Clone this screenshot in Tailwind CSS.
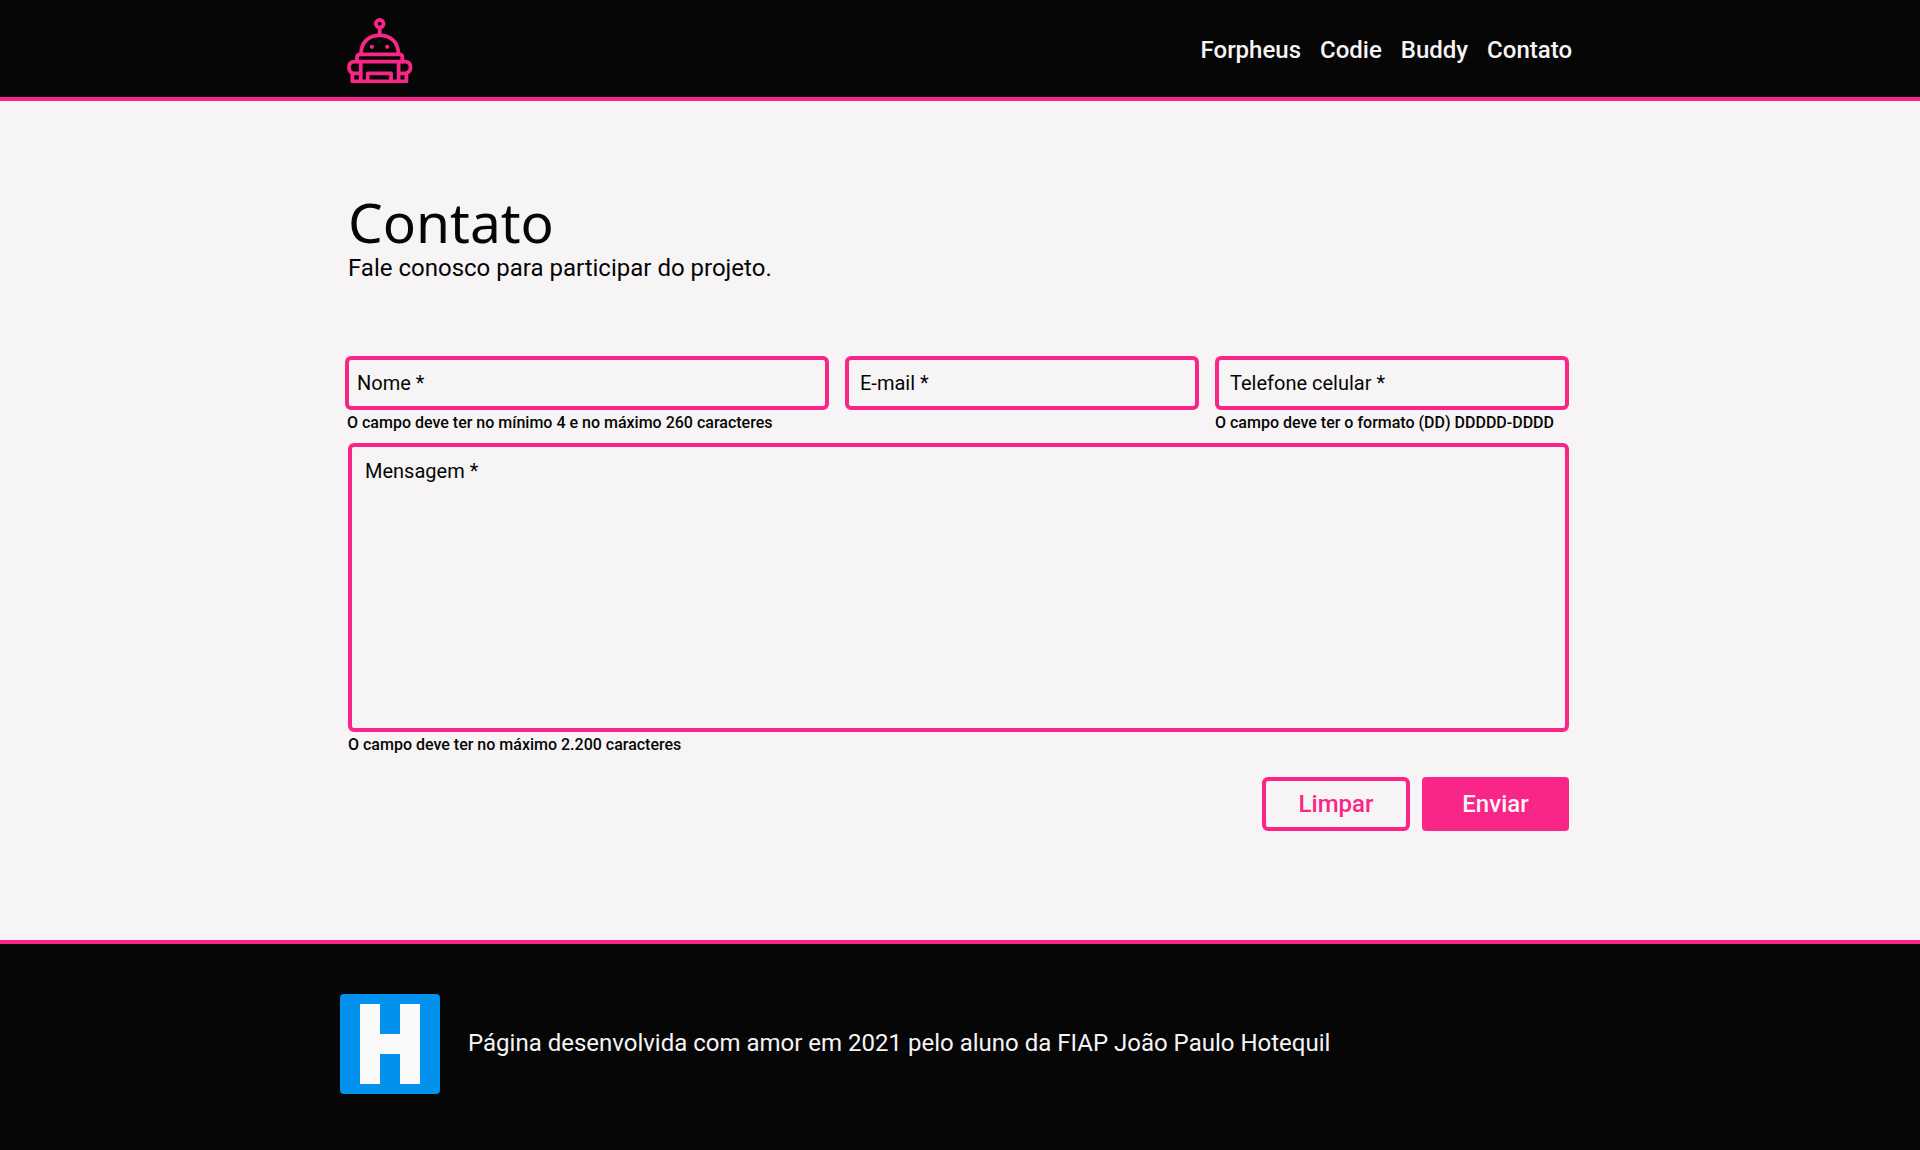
<!DOCTYPE html>
<html lang="pt-BR">
<head>
<meta charset="utf-8">
<meta name="viewport" content="width=device-width, initial-scale=1">
<title>Contato</title>
<script src="https://cdn.jsdelivr.net/npm/@tailwindcss/browser@4"></script>
</head>
<body class="flex min-h-screen flex-col bg-[#f6f4f5] font-['Roboto',sans-serif] text-[#060606]">
  <header class="border-b-4 border-[#f92587] bg-[#060606]">
    <div class="mx-auto flex h-[97px] w-full max-w-[1240px] items-center justify-between pr-2 pl-[7px] pt-[2px]">
      <a href="#" aria-label="Início">
        <svg class="size-[66px]" viewBox="0 0 66 66" fill="none" stroke="#f92587" stroke-width="3.8" stroke-linejoin="round" stroke-linecap="round">
          <circle cx="32.7" cy="6.7" r="3.8"/>
          <path d="M32.7 11v7"/>
          <path d="M14 37C14 25 22 18.3 32.7 18.3S51.4 25 51.4 37"/>
          <path d="M13 37.3H52.5Q55.3 37.3 55.3 40V44.7H10V40Q10 37.3 13 37.3Z"/>
          <path d="M10 44.7H7.5Q2 44.7 2 50.3Q2 54.5 5.3 56.3V64.3H59.4V56.3Q63.5 54.5 63.5 50.3Q63.5 44.7 58 44.7H55.3"/>
          <path d="M13.7 45V64M51.6 45V64M5.3 56.3H13.7M51.6 56.3H59.4M20.7 64V56.3H44V64"/>
          <g fill="#f92587" stroke="none"><circle cx="24.8" cy="29.8" r="2.1"/><circle cx="40.2" cy="29.8" r="2.1"/></g>
        </svg>
      </a>
      <nav class="flex gap-[19px] text-2xl font-medium text-[#f6f4f5]">
        <a href="#forpheus">Forpheus</a>
        <a href="#codie">Codie</a>
        <a href="#buddy">Buddy</a>
        <a href="#contato">Contato</a>
      </nav>
    </div>
  </header>

  <main class="mx-auto w-full max-w-[1240px] grow pt-[91px] pr-[11px] pb-[108px] pl-[5px]">
    <h1 class="pl-[3px] font-['Noto_Sans',sans-serif] text-[55px] leading-[60px]">Contato</h1>
    <p class="pl-[3px] text-2xl">Fale conosco para participar do projeto.</p>

    <form class="mt-[72px]">
      <div class="grid grid-cols-[484fr_354fr_354fr] gap-4">
        <div>
          <input type="text" aria-label="Nome" placeholder="Nome *" class="block h-[54px] w-full rounded-md border-4 border-[#f92587] px-2 text-xl placeholder:text-[#060606]">
          <p class="mt-[3px] pl-[2px] text-base leading-5 font-medium">O campo deve ter no mínimo 4 e no máximo 260 caracteres</p>
        </div>
        <div>
          <input type="email" aria-label="E-mail" placeholder="E-mail *" class="block h-[54px] w-full rounded-md border-4 border-[#f92587] px-[11px] text-xl placeholder:text-[#060606]">
        </div>
        <div>
          <input type="tel" aria-label="Telefone celular" placeholder="Telefone celular *" class="block h-[54px] w-full rounded-md border-4 border-[#f92587] px-[11px] text-xl placeholder:text-[#060606]">
          <p class="mt-[3px] text-base leading-5 font-medium">O campo deve ter o formato (DD) DDDDD-DDDD</p>
        </div>
      </div>
      <div class="mt-[10px] pl-[3px]">
        <textarea aria-label="Mensagem" placeholder="Mensagem *" class="block h-[289px] w-full resize-none rounded-md border-4 border-[#f92587] px-[13px] py-[10px] text-xl placeholder:text-[#060606]"></textarea>
        <p class="mt-[3px] text-base leading-5 font-medium">O campo deve ter no máximo 2.200 caracteres</p>
      </div>
      <div class="mt-[22px] flex justify-end gap-3 text-2xl font-medium">
        <button type="reset" class="h-[54px] w-[148px] rounded-md border-4 border-[#f92587] text-[#f92587]">Limpar</button>
        <button type="submit" class="h-[54px] w-[147px] rounded bg-[#f92587] text-[#f6f4f5]">Enviar</button>
      </div>
    </form>
  </main>

  <footer class="border-t-4 border-[#f92587] bg-[#060606]">
    <div class="mx-auto flex w-full max-w-[1240px] items-center gap-7 pt-[50px] pb-14">
      <svg class="size-[100px] shrink-0" viewBox="0 0 100 100" role="img" aria-label="Hotequil">
        <rect width="100" height="100" rx="4" fill="#0391ee"/>
        <path fill="#fafafa" d="M20 10h20v30h20V10h20v80H60V60H40v30H20z"/>
      </svg>
      <p class="pb-[2px] text-2xl text-[#f6f4f5]">Página desenvolvida com amor em 2021 pelo aluno da FIAP João Paulo Hotequil</p>
    </div>
  </footer>
</body>
</html>
